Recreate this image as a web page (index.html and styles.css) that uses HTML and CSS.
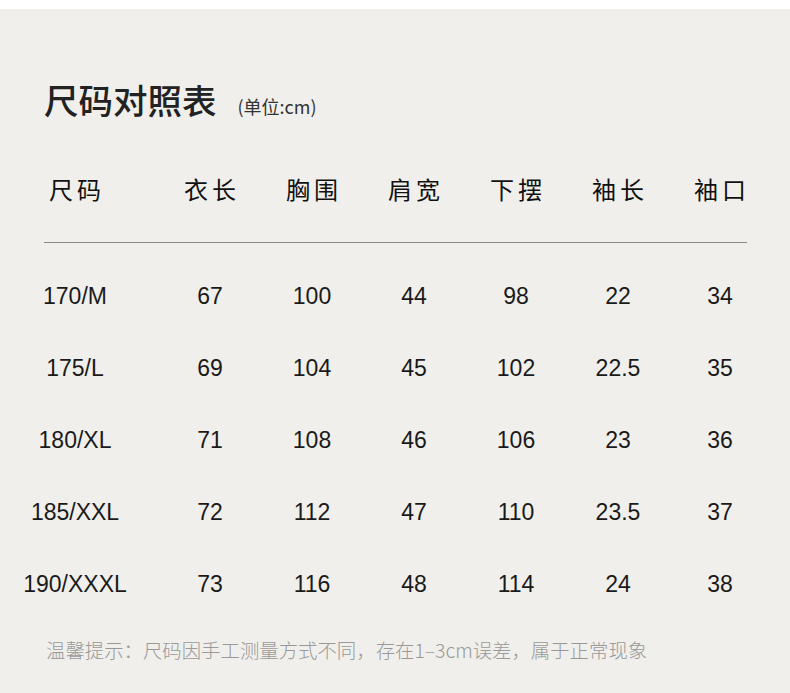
FILE: index.html
```html
<!DOCTYPE html>
<html lang="zh-CN">
<head>
<meta charset="utf-8">
<title>尺码对照表</title>
<link rel="stylesheet" href="styles.css">
</head>
<body>
<div class="page">
  <div class="title-bar">
    <h1 class="title">尺码对照表</h1>
    <span class="unit">(单位:cm)</span>
  </div>
  <div class="row head">
    <div class="cell first">尺码</div>
    <div class="cell">衣长</div>
    <div class="cell">胸围</div>
    <div class="cell">肩宽</div>
    <div class="cell">下摆</div>
    <div class="cell">袖长</div>
    <div class="cell">袖口</div>
  </div>
  <div class="divider"></div>
  <div class="rows">
    <div class="row data">
      <div class="cell first">170/M</div><div class="cell">67</div><div class="cell">100</div><div class="cell">44</div><div class="cell">98</div><div class="cell">22</div><div class="cell">34</div>
    </div>
    <div class="row data">
      <div class="cell first">175/L</div><div class="cell">69</div><div class="cell">104</div><div class="cell">45</div><div class="cell">102</div><div class="cell">22.5</div><div class="cell">35</div>
    </div>
    <div class="row data">
      <div class="cell first">180/XL</div><div class="cell">71</div><div class="cell">108</div><div class="cell">46</div><div class="cell">106</div><div class="cell">23</div><div class="cell">36</div>
    </div>
    <div class="row data">
      <div class="cell first">185/XXL</div><div class="cell">72</div><div class="cell">112</div><div class="cell">47</div><div class="cell">110</div><div class="cell">23.5</div><div class="cell">37</div>
    </div>
    <div class="row data">
      <div class="cell first">190/XXXL</div><div class="cell">73</div><div class="cell">116</div><div class="cell">48</div><div class="cell">114</div><div class="cell">24</div><div class="cell">38</div>
    </div>
  </div>
  <p class="note">温馨提示：尺码因手工测量方式不同，存在1–3cm误差，属于正常现象</p>
</div>
</body>
</html>
```

FILE: styles.css
```css
html, body {
  margin: 0;
  padding: 0;
  background: #ffffff;
}
body {
  font-family: "Noto Sans CJK SC", "Noto Sans", sans-serif;
  color: #1e1e1e;
}
.page {
  margin-top: 9px;
  height: 684px;
  background: #f0efeb;
  padding-top: 70px;
  box-sizing: border-box;
  overflow: hidden;
}
.title-bar {
  display: flex;
  align-items: baseline;
  padding-left: 44px;
  height: 40px;
  line-height: 40px;
}
.title {
  margin: 0;
  font-size: 34.5px;
  font-weight: 500;
  color: #222222;
}
.unit {
  margin-left: 21px;
  font-family: "Noto Sans CJK SC", sans-serif;
  font-size: 18px;
  font-weight: 400;
  color: #333333;
}
.row {
  display: grid;
  grid-template-columns: 159px repeat(6, 102px);
  align-items: center;
}
.cell {
  text-align: center;
}
.cell.first {
  padding-right: 9px;
}
.head {
  margin-top: 45px;
  height: 48px;
  font-size: 24px;
  letter-spacing: 4px;
  text-indent: 4px;
  color: #111111;
}
.divider {
  margin: 30px 43px 0 44px;
  height: 1px;
  background: #8a8a8a;
}
.rows {
  margin-top: 17px;
}
.data {
  height: 72px;
  font-family: "Liberation Sans", Arial, sans-serif;
  font-size: 23px;
  color: #1a1a1a;
}
.note {
  margin: 15px 0 0 46px;
  line-height: 30px;
  font-size: 19.4px;
  font-weight: 300;
  color: #999999;
}
```
